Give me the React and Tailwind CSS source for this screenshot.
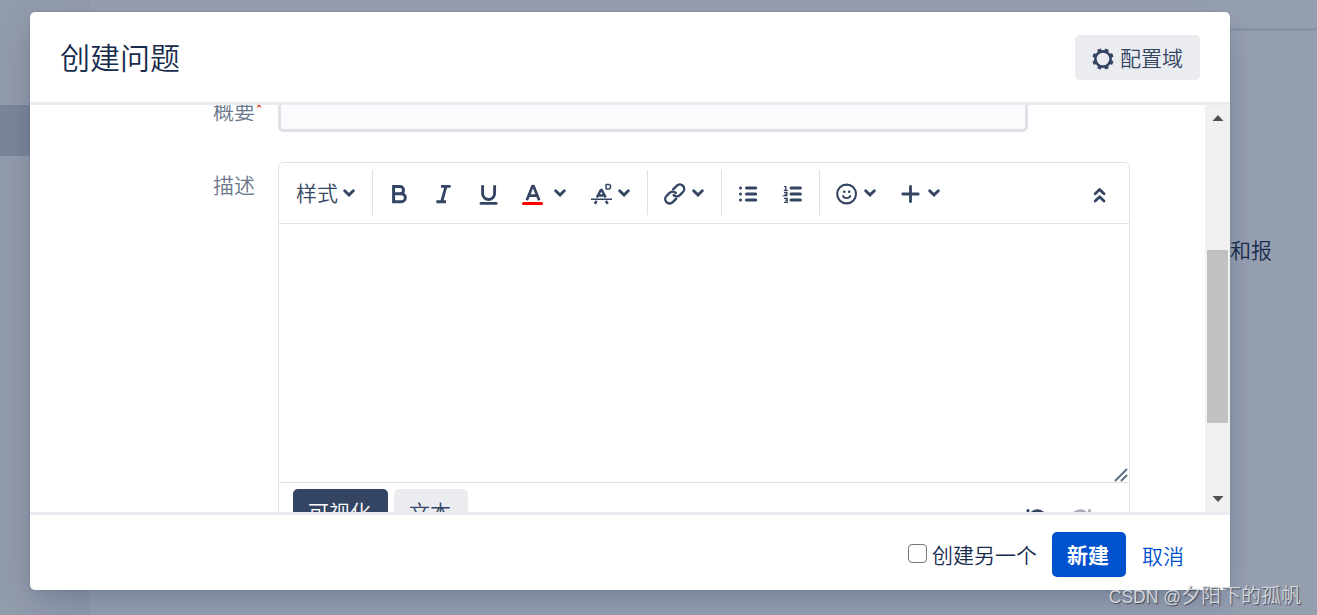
import React, { useState } from 'react';

const Icon = ({ className = '', children }) => (
  <svg viewBox="0 0 24 24" fill="none" stroke="currentColor" strokeWidth="2.8" strokeLinecap="round" strokeLinejoin="round" className={`w-6 h-6 shrink-0 ${className}`}>
    {children}
  </svg>
);

const Chevron = ({ className = '' }) => (
  <svg viewBox="0 0 12 12" fill="none" stroke="currentColor" strokeWidth="2.9" strokeLinecap="round" strokeLinejoin="round" className={`w-3 h-3 shrink-0 ${className}`}>
    <path d="M1.7 3.7l4.3 4.4 4.3-4.4" />
  </svg>
);

const Divider = ({ className = '' }) => <div className={`w-px h-[45px] shrink-0 -mt-px bg-[#dfe1e5] ${className}`} />;

const Gear = () => (
  <svg viewBox="0 0 24 24" className="w-6 h-6 shrink-0" fill="currentColor">
    <circle cx="12" cy="12" r="7.6" fill="none" stroke="currentColor" strokeWidth="2.6" />
    {[22.5, 67.5, 112.5, 157.5, 202.5, 247.5, 292.5, 337.5].map(a => (
      <rect key={a} x="10" y="1.3" width="4" height="3.8" rx="0.8" transform={`rotate(${a} 12 12)`} />
    ))}
  </svg>
);

function Toolbar() {
  return (
    <div className="h-[61px] border-b border-[#dfe1e5] flex items-center text-[#344563]">
      <span className="ml-[17px] w-[42px] -mt-0.5">样式</span>
      <Chevron className="ml-[5px]" />
      <Divider className="ml-[17px]" />
      <Icon className="ml-[14px]">
        <path d="M6.6 5.6h6.4a3.5 3.5 0 0 1 0 7.1H6.6zM6.6 12.7h7.7a4 4 0 0 1 0 8H6.6z" strokeWidth="3" strokeLinejoin="miter" />
      </Icon>
      <Icon className="ml-5">
        <path d="M10 5.4h9.6M5.4 20.7h9.6M14.9 5.6l-4.2 15" strokeLinecap="butt" strokeWidth="2.9" />
      </Icon>
      <Icon className="ml-[21px]">
        <path d="M6.6 4.2v8.3a6 6 0 0 0 12 0V4.2" strokeLinecap="butt" strokeWidth="2.9" />
        <path d="M5 22.4h15.2" />
      </Icon>
      <Icon className="ml-5">
        <path d="M6.8 19.2L12.5 5h1l5.7 14.2M9 14.7h8" strokeLinecap="butt" strokeWidth="2.7" />
        <path d="M3.5 22.5h18" stroke="#ff0000" strokeWidth="3" />
      </Icon>
      <Chevron className="ml-[10px]" />
      <Icon className="ml-[23px]">
        <path d="M2 18.2h21" strokeWidth="1.6" strokeLinecap="butt" />
        <path d="M7.9 16.5l3.9-7.5h1l3.9 7.500M10 14.500h4.600M7.600 19.900l-1.800 3M16.900 19.900l1.800 3" strokeWidth="2.500" strokeLinecap="butt" />
        <path d="M17.1 3.5h3a1.4 1.4 0 0 1 1.4 1.4v1a2 2 0 0 1-2 2h-2.4z" strokeWidth="1.5" />
      </Icon>
      <Chevron className="ml-[5px]" />
      <Divider className="ml-[17px]" />
      <Icon className="ml-[15px]">
        <g transform="rotate(-45 11.7 13)">
          <path d="M9.5 17.4H4.5a4.4 4.4 0 0 1 0-8.8h4.3a4.4 4.4 0 0 1 4.4 4.4" strokeWidth="2.4" />
          <path d="M13.9 8.6h5a4.4 4.4 0 0 1 0 8.8h-4.3a4.4 4.4 0 0 1-4.4-4.4" strokeWidth="2.4" />
        </g>
      </Icon>
      <Chevron className="ml-[5px]" />
      <Divider className="ml-[17px]" />
      <Icon className="ml-[14px]">
        <path d="M4.5 7h.01M4.5 13h.01M4.5 19h.01M10.5 7h9.2M10.5 13h9.2M10.5 19h9.2" strokeWidth="3" />
      </Icon>
      <Icon className="ml-5">
        <path d="M11 7h9.4M11 13h9.4M11 19h9.4" strokeWidth="3" />
        <path d="M4 5.7h1.8v3.6M3.8 9.4h4M4 11.5h3v1.4L4.2 14.6h3.4M4 17.3h3.2v4H4M5 19.2h2" strokeWidth="1.3" strokeLinecap="butt" strokeLinejoin="miter" />
      </Icon>
      <Divider className="ml-[15px]" />
      <Icon className="ml-[15px]">
        <circle cx="11.6" cy="13" r="9.4" strokeWidth="2.1" />
        <path d="M9.3 10.8h.01M14.1 10.8h.01" strokeWidth="2.6" />
        <path d="M8 15c.8 2.8 6.4 2.8 7.2 0" strokeWidth="1.9" />
      </Icon>
      <Chevron className="ml-[5px]" />
      <Icon className="ml-[22px]">
        <path d="M12.5 5.3v15.4M4.8 13h15.4" />
      </Icon>
      <Chevron className="ml-[6px]" />
      <Icon className="ml-auto mr-[18px]">
        <path d="M8.2 12.8l4.4-4.3 4.4 4.3M8.2 20.1l4.4-4.3 4.4 4.3" />
      </Icon>
    </div>
  );
}

function Editor() {
  return (
    <div className="w-[852px] h-[390px] shrink-0 border border-[#dfe1e5] rounded-[5px]">
      <Toolbar />
      <div className="h-[259px] border-b border-[#dfe1e5] flex items-end justify-end pr-px">
        <svg viewBox="0 0 14 14" className="w-[14px] h-[14px] text-[#5e6c84]" fill="none" stroke="currentColor" strokeWidth="2" strokeLinecap="round">
          <path d="M1.5 12.5l11-11M7.5 12.5l5-5" />
        </svg>
      </div>
      <div className="flex pt-[6px] pl-[14px] gap-[6px] text-[#344563]">
        <button className="w-[95px] h-[45px] rounded-[5px] bg-[#344563] text-white pr-0.5 pb-0.5">可视化</button>
        <button className="w-[74px] h-[45px] rounded-[5px] bg-[#ebecf0] pr-0.5 pb-0.5">文本</button>
        <Icon className="ml-auto mt-[19px]">
          <path d="M4 2.5v6h6M5 8C10 1.200 16 1.200 20 6" />
        </Icon>
        <Icon className="mt-[19px] ml-4 mr-[35px] text-[#a5adba]">
          <path d="M19.500 2.500v6h-6M18.500 8C14 1.200 8 1.200 3 6" />
        </Icon>
      </div>
    </div>
  );
}

function Scrollbar() {
  return (
    <div className="w-[25px] shrink-0 bg-[#f1f1f1] flex flex-col items-center text-[#505050]">
      <svg viewBox="0 0 12 6" className="w-3 h-[6px] mt-[10px]" fill="currentColor"><path d="M0.500 6L6 0l5.500 6z" /></svg>
      <div className="w-[21px] h-[173px] mt-[129px] bg-[#c1c1c1]" />
      <svg viewBox="0 0 12 6" className="w-3 h-[6px] mt-auto mb-[10px]" fill="currentColor"><path d="M0.500 0L6 6l5.500-6z" /></svg>
    </div>
  );
}

export default function App() {
  const [another, setAnother] = useState(false);

  return (
    <div className="relative w-[1317px] h-[615px] overflow-hidden flex bg-[#969fb0] text-[21px] leading-[30px] font-[350] text-[#172b4d] font-['Noto_Sans_CJK_SC',sans-serif]">
      <div className="w-[90px] h-full bg-[#929bac] pt-[105px]">
        <div className="h-[51px] bg-[#7a859a]" />
      </div>
      <div className="flex-1">
        <div className="h-[31px] border-b-[3px] border-[#8993a6]" />
        <p className="text-right pr-[45px] pt-[203px]">和报</p>
      </div>

      <div className="absolute left-[30px] top-3 w-[1200px] h-[578px] rounded-[5px] bg-white flex flex-col overflow-hidden shadow-[0_0_2px_rgba(9,30,66,0.15),0_12px_30px_-6px_rgba(9,30,66,0.28)]">
        <header className="h-[93px] shrink-0 border-b-[3px] border-[#ebecf2] flex items-center justify-between pl-[30px] pr-[30px]">
          <h2 className="text-[30px] leading-[40px] -mt-[3px]">创建问题</h2>
          <button className="w-[125px] h-[45px] rounded-[5px] bg-[#ebecf0] text-[#344563] flex items-center pl-4 pt-[3px]">
            <Gear />
            <span className="ml-[5px] -mt-[3px]">配置域</span>
          </button>
        </header>

        <div className="flex-1 min-h-0 flex">
          <div className="flex-1 overflow-hidden">
            {/* form is scrolled down a little */}
            <div className="-mt-[33px] flex flex-col gap-[30px] text-[#6b778c]">
              <div className="flex">
                <label className="w-[248px] pl-[183px] pt-[23px]">
                  概要<span className="text-[#de350b] text-[18px] align-[3px] leading-none">*</span>
                </label>
                <input className="w-[750px] h-[60px] border-[3px] border-[#dfe1e6] rounded-[5px] bg-[#fafbfc]" />
              </div>
              <div className="flex">
                <label className="w-[248px] pl-[183px] pt-[7px]">描述</label>
                <Editor />
              </div>
            </div>
          </div>
          <Scrollbar />
        </div>

        <footer className="h-[78px] shrink-0 border-t-[3px] border-[#ebecf2] flex items-center justify-end pr-[46px] pt-1">
          <input type="checkbox" checked={another} onChange={() => setAnother(!another)} className="appearance-none w-[19px] h-[19px] border-[1.5px] border-[#767676] rounded-[4px] -mt-[3px] mr-[5px]" />
          <span className="mr-[15px] -mt-px">创建另一个</span>
          <button className="w-[74px] h-[45px] rounded-[5px] bg-[#0052cc] text-white font-bold pr-0.5 pb-px mr-4">新建</button>
          <a className="text-[#0052cc]">取消</a>
        </footer>
      </div>

      <div className="absolute right-[16px] bottom-[3px] text-[20px] text-[#d4d7dc] whitespace-nowrap font-['Liberation_Sans','Noto_Sans_CJK_SC',sans-serif] [text-shadow:1px_1px_1px_#414b5c]">
        <span className="text-[17.5px]">CSDN @</span>夕阳下的孤帆
      </div>
    </div>
  );
}
